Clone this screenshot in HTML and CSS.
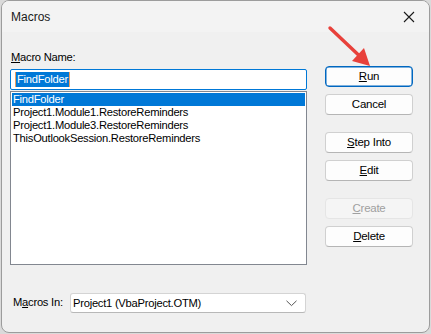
FILE: index.html
```html
<!DOCTYPE html>
<html>
<head>
<meta charset="utf-8">
<link rel="stylesheet" href="styles.css">
</head>
<body>
<div class="window">
  <div class="titlebar">
    <span class="title">Macros</span>
    <svg class="close" width="12" height="12" viewBox="0 0 12 12"><path d="M1 1 L11 11 M11 1 L1 11" stroke="#1a1a1a" stroke-width="1.1" fill="none"/></svg>
  </div>
  <div class="body">
    <div class="left">
      <div class="label"><u>M</u>acro Name:</div>
      <div class="input"><span class="sel">FindFolder</span></div>
      <div class="list">
        <div class="item active">FindFolder</div>
        <div class="item">Project1.Module1.RestoreReminders</div>
        <div class="item">Project1.Module3.RestoreReminders</div>
        <div class="item">ThisOutlookSession.RestoreReminders</div>
      </div>
      <div class="inrow">
        <span class="inlabel">M<u>a</u>cros In:</span>
        <div class="select">
          <span>Project1 (VbaProject.OTM)</span>
          <svg width="11" height="7" viewBox="0 0 11 7"><path d="M0.5 0.8 L5.5 5.6 L10.5 0.8" stroke="#555" stroke-width="1" fill="none"/></svg>
        </div>
      </div>
    </div>
    <div class="right">
      <div class="btn primary"><u>R</u>un</div>
      <div class="btn">Cancel</div>
      <div class="btn gap"><u>S</u>tep Into</div>
      <div class="btn"><u>E</u>dit</div>
      <div class="btn gap disabled"><u>C</u>reate</div>
      <div class="btn"><u>D</u>elete</div>
    </div>
  </div>
  <svg class="arrow" width="60" height="50" viewBox="320 20 60 50">
    <path d="M329 28 L357 54.5" stroke="#e8413b" stroke-width="3.4" stroke-linecap="round" fill="none"/>
    <polygon points="369,66 351,61 363,48" fill="#e8413b"/>
  </svg>
</div>
</body>
</html>
```

FILE: styles.css
```css
html, body {
  margin: 0;
  padding: 0;
}
body {
  background: #dadada;
  width: 431px;
  height: 334px;
  overflow: hidden;
  font-family: "Liberation Sans", Arial, sans-serif;
  font-size: 11.2px;
  letter-spacing: -0.25px;
  color: #000;
}
.window {
  position: relative;
  box-sizing: border-box;
  margin-left: 1px;
  width: 429px;
  height: 333px;
  border: 1px solid #9c9c9c;
  border-radius: 8px;
  background: #f0f0f0;
  overflow: hidden;
}
.titlebar {
  height: 31px;
  background: #f3f3f3;
  display: flex;
  align-items: center;
  justify-content: space-between;
  padding: 0 12px 0 9px;
}
.title {
  font-size: 12px;
  letter-spacing: 0;
  color: #1a1a1a;
  margin-top: 1px;
}
.close {
  display: block;
  margin-right: 2px;
}
.body {
  display: flex;
  padding: 18px 0 0 8px;
}
.left {
  width: 297px;
  display: flex;
  flex-direction: column;
}
.label {
  height: 14px;
  line-height: 14px;
  padding-left: 1px;
  margin-bottom: 5px;
}
.input {
  box-sizing: border-box;
  height: 21px;
  border: 1px solid #0078d7;
  border-radius: 2px;
  background: #fff;
  padding: 2px 0 0 4px;
}
.sel {
  display: inline-block;
  background: #0078d7;
  color: #fff;
  line-height: 15px;
  padding: 0 1px;
  border-left: 1px solid #f0a060;
  border-right: 1px solid #f0a060;
}
.list {
  box-sizing: border-box;
  margin-top: 1px;
  height: 174px;
  border: 1px solid #828790;
  background: #fff;
  padding: 1px 1px;
}
.item {
  height: 13px;
  line-height: 13px;
  padding-left: 1px;
  white-space: nowrap;
}
.item.active {
  background: #0078d7;
  color: #fff;
}
.inrow {
  display: flex;
  align-items: center;
  margin-top: 28px;
}
.inlabel {
  width: 60px;
  padding-left: 3px;
  margin-top: -3px;
  box-sizing: border-box;
}
.select {
  box-sizing: border-box;
  width: 236px;
  height: 20px;
  background: #fff;
  border: 1px solid #d4d4d4;
  border-bottom-color: #b8b8b8;
  border-radius: 3px;
  display: flex;
  align-items: center;
  justify-content: space-between;
  padding: 0 8px 0 2px;
}
.select svg {
  display: block;
}
.right {
  display: flex;
  flex-direction: column;
  margin-left: 18px;
  padding-top: 16px;
}
.btn {
  box-sizing: border-box;
  width: 88px;
  height: 21px;
  margin-bottom: 7px;
  background: #fdfdfd;
  border: 1px solid #d0d0d0;
  border-bottom-color: #b5b5b5;
  border-radius: 4px;
  text-align: center;
  line-height: 19px;
  font-size: 11.5px;
}
.btn.gap {
  margin-top: 10px;
}
.btn.primary {
  border: 1px solid #0067c0;
  box-shadow: inset 0 0 0 0.5px #0067c0;
}
.btn.disabled {
  background: #f5f5f5;
  border-color: #e5e5e5;
  color: #a0a0a0;
}
.arrow {
  position: absolute;
  left: 319px;
  top: 19px;
}
```
